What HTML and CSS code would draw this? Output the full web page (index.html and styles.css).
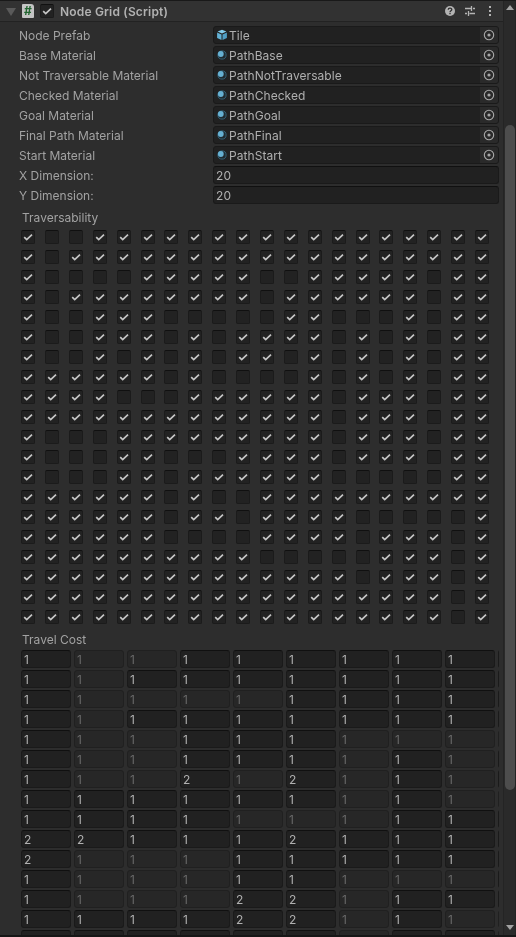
FILE: index.html
```html
<!DOCTYPE html>
<html lang="en">
<head>
<meta charset="utf-8">
<title>Node Grid Inspector</title>
<link rel="stylesheet" href="styles.css">
</head>
<body>
<svg class="defs" width="0" height="0">
  <symbol id="check" viewBox="0 0 14 14"><path d="M3.2 7.2 5.7 9.6 11 4.700" fill="none" stroke="#c6c6c6" stroke-width="1.7"/></symbol>
  <symbol id="pick" viewBox="0 0 18 16"><circle cx="9" cy="8" r="4.7" fill="none" stroke="#a8a8a8" stroke-width="1.1"/><circle cx="9" cy="8" r="1.6" fill="#a8a8a8"/></symbol>
  <symbol id="sphere" viewBox="0 0 12 12"><circle cx="6" cy="6" r="4.1" fill="#202b30" stroke="#35657c" stroke-width=".9"/><circle cx="4.8" cy="5" r="2.900" fill="#66b0d2"/></symbol>
  <symbol id="cube" viewBox="0 0 12 12"><path d="M6 .8 10.4 2.6 6 4.4 1.6 2.6Z" fill="#84cdec"/><path d="M1.1 3.6 5.5 5.4V11L1.1 9Z" fill="#62b1d5"/><path d="M10.9 3.6 6.5 5.4V11L10.9 9Z" fill="#4f9ec4"/></symbol>
</svg>
<div class="window">
  <main class="inspector">
    <header class="header">
      <svg class="fold" viewBox="0 0 10 8"><path d="M0 0H10L5 8Z" fill="#5a5a5a"/></svg>
      <span class="script-icon">#</span>
      <span class="box"><svg><use href="#check"/></svg></span>
      <h1>Node Grid (Script)</h1>
      <div class="tools">
        <svg viewBox="0 0 12 12"><circle cx="6" cy="6" r="5" fill="#b4b4b4"/><path d="M4.2 4.8C4.2 2.6 7.8 2.6 7.8 4.6 7.8 5.8 6 5.8 6 7.2M6 8v1.3" fill="none" stroke="#303030" stroke-width="1.3"/></svg>
        <svg viewBox="0 0 12 12"><path d="M1 3.5H7M9 3.5H11M7.5 1V6M1 8.5H3M5.5 8.5H11M4.5 6V11" fill="none" stroke="#b4b4b4" stroke-width="1.3"/></svg>
        <svg viewBox="0 0 12 12"><path d="M5 1H7V3H5ZM5 5H7V7H5ZM5 9H7V11H5Z" fill="#b4b4b4"/></svg>
      </div>
    </header>
    <section class="props" id="props"></section>
    <h2>Traversability</h2>
    <section class="checks" id="checks"></section>
    <h2 class="cost-title">Travel Cost</h2>
    <section class="costs" id="costs"></section>
  </main>
  <aside class="scrollbar">
    <svg class="arrow" viewBox="0 0 8 5"><path d="M0 5 4 0 8 5Z" fill="#a2a2a2"/></svg>
    <div class="track"><div class="thumb"></div></div>
    <svg class="arrow" viewBox="0 0 8 5"><path d="M0 0H8L4 5Z" fill="#a2a2a2"/></svg>
  </aside>
</div>
<script src="script.js"></script>
</body>
</html>
```
FILE: styles.css
```css
* { box-sizing: border-box; }
body { margin: 0; background: #2d2d2d; color: #a2a2a2; font: 12px/16px Inter, "Liberation Sans", sans-serif; }
svg { display: block; }
.defs { position: absolute; }
.window { display: flex; height: 937px; border-top: 1px solid #191919; border-bottom: 2px solid #161616; overflow: hidden; will-change: transform; }
.inspector { width: 503px; height: 934px; overflow: hidden; }
.header { display: flex; align-items: center; height: 21px; padding: 0 7px 0 6px; background: #323232; border-bottom: 1px solid #222; }
.fold { width: 10px; height: 8px; margin-top: 1px; }
.script-icon { width: 12px; height: 14px; margin: 0 6px; border-radius: 1px 3px 1px 1px; background: #c4c4c4; color: #226530; font: bold 12px/14px Inter, sans-serif; text-align: center; }
h1 { margin: 0 0 0 6px; font-size: 12px; line-height: 16px; font-weight: 600; letter-spacing: .17px; color: #b2b2b2; padding-top: 1px; }
.tools { display: flex; gap: 8px; margin-left: auto; }
.tools svg { width: 12px; height: 12px; }
.box { display: block; width: 14px; height: 14px; border: 1px solid #1b1b1b; border-top-color: #101010; border-radius: 2px; background: #222; }
.box svg { width: 14px; height: 14px; margin: -1px; }
.props { display: grid; gap: 2px; padding: 4px 4px 0 19px; }
.row { display: grid; grid-template-columns: 194px 1fr; height: 18px; }
.label { padding-top: 2px; white-space: nowrap; }
.field { display: flex; align-items: center; height: 18px; overflow: hidden; border: 1px solid #1a1a1a; border-top-color: #101010; border-radius: 3px; background: #212121; color: #b0b0b0; padding-left: 2px; letter-spacing: .06px; }
.object { border-top-color: #1a1a1a; }
.object .icon { width: 12px; height: 12px; margin: 0 1px 0 0; }
.field span { padding-top: 1px; }
.pick { width: 18px; height: 16px; margin-left: auto; background: #2a2a2a; }
h2 { margin: 6px 0 0 22px; height: 16px; font-size: 12px; line-height: 16px; font-weight: 400; }
.checks { display: grid; grid-template-columns: repeat(5, 24px) 23px repeat(8, 24px) 23px repeat(5, 24px); grid-auto-rows: 20px; padding: 4px 0 0 21px; }
.cost-title { margin-top: 2px; }
.costs { display: grid; grid-template-columns: repeat(10, 50px); grid-auto-rows: 18px; gap: 2px 3px; width: 478px; margin: 2px 0 0 21px; overflow: hidden; }
.off { background: #272727; border-color: #202020; color: #686868; }
.scrollbar { display: flex; flex-direction: column; align-items: center; width: 13px; padding: 4px 0 5px 1px; background: #2a2a2a; border-left: 1px solid #242424; border-right: 1px solid #242424; }
.arrow { width: 8px; height: 5px; }
.track { flex: 1; width: 10px; padding-top: 115px; }
.thumb { height: 665px; border-radius: 5px; background: #4d4d4d; }
```
FILE: script.js
```js
const properties = [
  ["Node Prefab", "Tile", "cube"],
  ["Base Material", "PathBase", "sphere"],
  ["Not Traversable Material", "PathNotTraversable", "sphere"],
  ["Checked Material", "PathChecked", "sphere"],
  ["Goal Material", "PathGoal", "sphere"],
  ["Final Path Material", "PathFinal", "sphere"],
  ["Start Material", "PathStart", "sphere"],
  ["X Dimension:", "20"],
  ["Y Dimension:", "20"]
];
const traversable = [
  "10011111111111111111",
  "10111111111111111111",
  "10000111110011111011",
  "10111111110111111011",
  "10011100000110001011",
  "10011101011110101011",
  "10010101011010101011",
  "11111101000010101011",
  "11110001111110111011",
  "11111111111110111011",
  "10001111111110111011",
  "10001100011110111011",
  "10001101111110000011",
  "11111101001111111111",
  "11111101101111000001",
  "11111100001111011101",
  "11111111110000011101",
  "11111111111111011101",
  "11111111111111111101",
  "11111111111111111101"
];
// Cells whose travel cost is 2, as "row,column".
const costly = new Set(["6,3", "6,5", "9,0", "9,1", "9,5", "10,0", "12,4", "12,5", "13,4", "13,5"]);

document.getElementById("props").innerHTML = properties.map(([label, value, icon]) =>
  `<div class="row"><div class="label">${label}</div>` + (icon
    ? `<div class="field object"><svg class="icon"><use href="#${icon}"/></svg><span>${value}</span><svg class="pick"><use href="#pick"/></svg></div>`
    : `<div class="field"><span>${value}</span></div>`) + "</div>").join("");

document.getElementById("checks").innerHTML = traversable.map(row =>
  [...row].map(c => `<div class="box">${c === "1" ? '<svg><use href="#check"/></svg>' : ""}</div>`).join("")).join("");

document.getElementById("costs").innerHTML = traversable.slice(0, 15).map((row, r) =>
  [...row].slice(0, 10).map((c, k) =>
    `<div class="field${c === "1" ? "" : " off"}">${k < 9 && r < 14 ? `<span>${costly.has(r + "," + k) ? 2 : 1}</span>` : ""}</div>`).join("")).join("");
```
